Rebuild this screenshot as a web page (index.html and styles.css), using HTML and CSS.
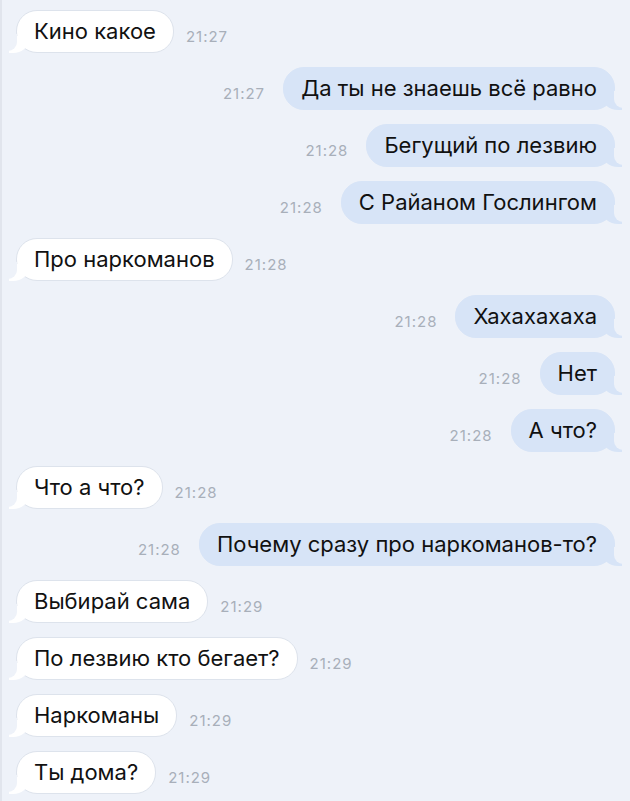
FILE: index.html
```html
<!DOCTYPE html>
<html lang="ru">

<head>
    <meta charset="UTF-8">
    <meta name="viewport" content="width=device-width, initial-scale=1.0">
    <title>Диалог</title>
    <link rel="stylesheet" href="styles.css">
</head>

<body>
    <div class="chat">
        <div class="row in"><div class="bubble">Кино какое</div><span class="time">21:27</span></div>
        <div class="row out"><span class="time">21:27</span><div class="bubble">Да ты не знаешь всё равно</div></div>
        <div class="row out"><span class="time">21:28</span><div class="bubble">Бегущий по лезвию</div></div>
        <div class="row out"><span class="time">21:28</span><div class="bubble">С Райаном Гослингом</div></div>
        <div class="row in"><div class="bubble">Про наркоманов</div><span class="time">21:28</span></div>
        <div class="row out"><span class="time">21:28</span><div class="bubble">Хахахахаха</div></div>
        <div class="row out"><span class="time">21:28</span><div class="bubble">Нет</div></div>
        <div class="row out"><span class="time">21:28</span><div class="bubble">А что?</div></div>
        <div class="row in"><div class="bubble">Что а что?</div><span class="time">21:28</span></div>
        <div class="row out"><span class="time">21:28</span><div class="bubble">Почему сразу про наркоманов-то?</div></div>
        <div class="row in"><div class="bubble">Выбирай сама</div><span class="time">21:29</span></div>
        <div class="row in"><div class="bubble">По лезвию кто бегает?</div><span class="time">21:29</span></div>
        <div class="row in"><div class="bubble">Наркоманы</div><span class="time">21:29</span></div>
        <div class="row in"><div class="bubble">Ты дома?</div><span class="time">21:29</span></div>
    </div>
</body>

</html>
```

FILE: styles.css
```css
* {
    margin: 0;
    padding: 0;
    box-sizing: border-box;
}

body {
    background: #eef2f9;
    border-left: 2px solid #e1e5ed;
    font-family: Inter, "Noto Sans", sans-serif;
    color: #111;
}

.chat {
    display: flex;
    flex-direction: column;
    gap: 14px;
    padding: 10px 0 10px;
}

.row {
    display: flex;
    align-items: flex-end;
}

.row.in {
    padding-left: 14px;
    gap: 12px;
}

.row.out {
    justify-content: flex-end;
    padding-right: 15px;
    gap: 18px;
}

.bubble {
    position: relative;
    height: 43px;
    line-height: 41px;
    padding: 0 17px;
    border-radius: 21px;
    font-size: 22px;
    font-weight: 400;
    white-space: nowrap;
}

.in .bubble {
    background: #fff;
    border: 1px solid #dde3ec;
}

.out .bubble {
    background: #d7e4f7;
    border: 1px solid #d7e4f7;
}

/* хвостики */
.bubble::before,
.bubble::after {
    content: "";
    position: absolute;
    bottom: -1px;
    height: 17px;
}

.in .bubble::before {
    left: -8px;
    border-left: 20px solid #fff;
    border-bottom-right-radius: 16px 14px;
}

.in .bubble::after {
    left: -11px;
    bottom: 1px;
    width: 11px;
    background: #eef2f9;
    border-bottom-right-radius: 9px;
}

.out .bubble::before {
    right: -8px;
    border-right: 20px solid #d7e4f7;
    border-bottom-left-radius: 16px 14px;
}

.out .bubble::after {
    right: -11px;
    bottom: 1px;
    width: 11px;
    background: #eef2f9;
    border-bottom-left-radius: 9px;
}

.time {
    font-size: 15px;
    line-height: 1;
    color: #a8afba;
    letter-spacing: 1px;
    margin-bottom: 9px;
}
```
